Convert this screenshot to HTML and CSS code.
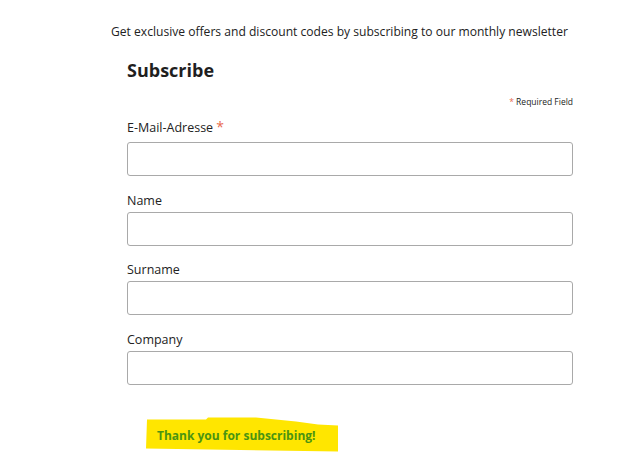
FILE: index.html
```html
<!DOCTYPE html>
<html>
<head>
<meta charset="utf-8">
<link rel="stylesheet" href="styles.css">
</head>
<body>
<div class="page">
  <p class="intro">Get exclusive offers and discount codes by subscribing to our monthly newsletter</p>
  <form class="form">
    <h2 class="title">Subscribe</h2>
    <div class="required-note"><span class="star">*</span> Required Field</div>
    <div class="field field-first">
      <label class="label">E-Mail-Adresse <span class="star big">*</span></label>
      <input class="input" type="text">
    </div>
    <div class="field">
      <label class="label">Name</label>
      <input class="input" type="text">
    </div>
    <div class="field">
      <label class="label">Surname</label>
      <input class="input" type="text">
    </div>
    <div class="field">
      <label class="label">Company</label>
      <input class="input" type="text">
    </div>
    <div class="thanks-row">
      <span class="thanks">Thank you for subscribing!</span>
    </div>
  </form>
</div>
</body>
</html>
```
FILE: styles.css
```css
* { box-sizing: border-box; }
html, body { margin: 0; padding: 0; background: #fff; }
body {
  font-family: "Open Sans", "Noto Sans", sans-serif;
  color: #1e1e1e;
}
.page {
  width: 633px;
  padding-top: 22px;
}
.intro {
  margin: 0;
  font-size: 12.1px;
  line-height: 20px;
  padding-left: 111px;
  white-space: nowrap;
  color: #222;
}
.form {
  margin-left: 127px;
  width: 446px;
}
.title {
  margin: 16px 0 0 0;
  font-size: 18px;
  line-height: 24px;
  font-weight: 700;
  color: #1f1f1f;
}
.required-note {
  text-align: right;
  font-size: 8.5px;
  line-height: 12px;
  margin-top: 14px;
  color: #222;
}
.star { color: #e86a4f; }
.star.big { font-size: 14px; line-height: 0; }
.field {
  display: flex;
  flex-direction: column;
}
.label {
  font-size: 12.5px;
  line-height: 18px;
  margin-top: 15.5px;
  margin-bottom: 2px;
  color: #222;
}
.field-first .label {
  margin-top: 11px;
  margin-bottom: 5px;
}
.input {
  height: 34px;
  width: 446px;
  border: 1px solid #a9a9a9;
  border-radius: 3px;
  background: #fff;
  margin: 0;
}
.thanks-row {
  margin-top: 32px;
  margin-left: 19px;
}
.thanks {
  display: inline-block;
  position: relative;
  width: 192px;
  height: 36px;
  padding-left: 11px;
  line-height: 38px;
  font-size: 12px;
  font-weight: 700;
  color: #4a9412;
  z-index: 0;
}
.thanks::before {
  content: "";
  position: absolute;
  inset: 0;
  background: #ffe600;
  z-index: -1;
  clip-path: polygon(1px 3px, 60px 3px, 62px 1px, 110px 1px, 150px 5px, 172px 8px, 192px 9px, 192px 35px, 0 32px);
}
```
